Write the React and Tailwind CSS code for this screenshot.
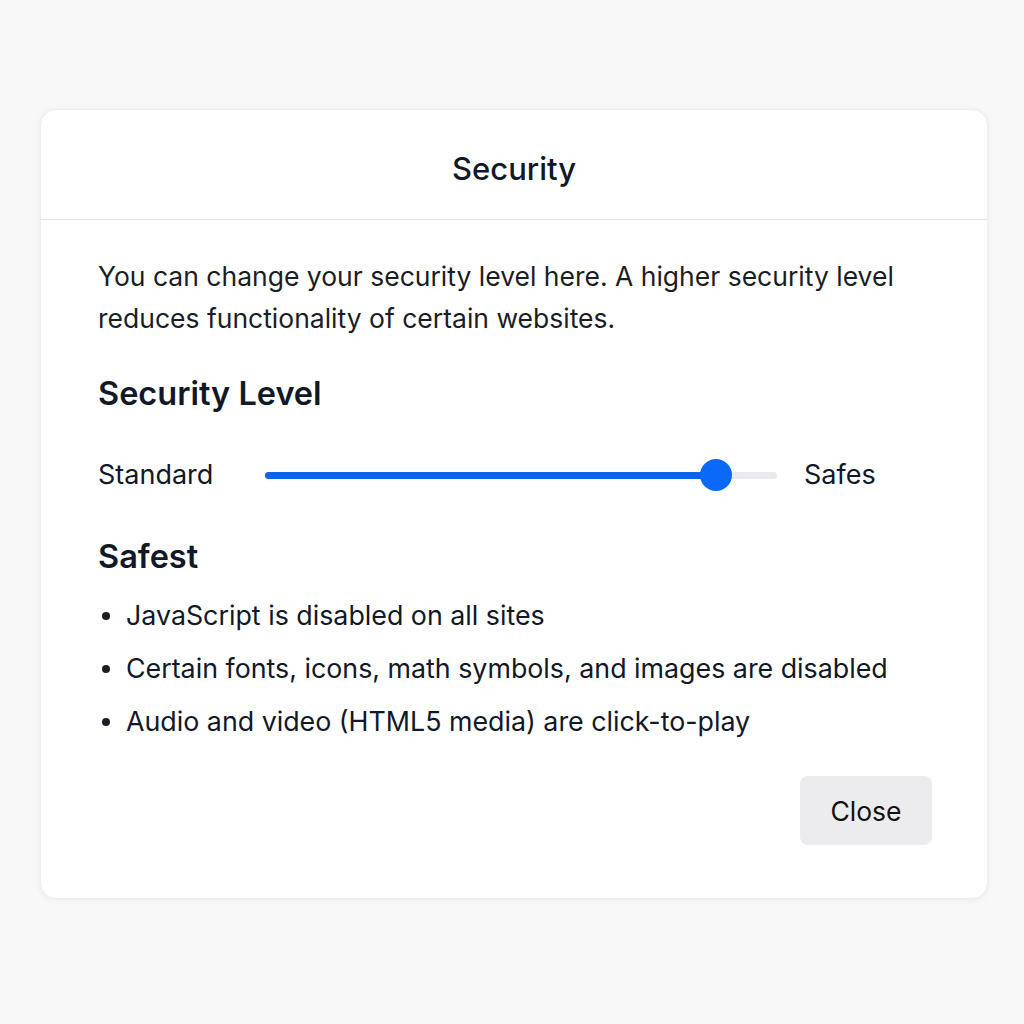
export default function App() {
  const font = { fontFamily: "Inter, 'Noto Sans', sans-serif" };
  return (
    <div className="w-[1024px] h-[1024px] bg-[#f8f8f8] pt-[109px] pl-[40px]" style={font}>
      <div className="w-[948px] h-[790px] bg-white rounded-[16px] shadow-[0_1px_6px_rgba(0,0,0,0.06)] border border-[#eeeeee] flex flex-col text-[#111827]">
        <div className="h-[110px] border-b border-[#e2e2e2] flex items-center justify-center">
          <h1 className="text-[31px] font-medium pt-[10px]">Security</h1>
        </div>
        <div className="pl-[57px] pr-[30px] pt-[35px]">
          <p className="text-[26.5px] leading-[42px] text-[#1a1d24]">
            You can change your security level here. A higher security level reduces functionality of certain websites.
          </p>
          <h2 className="mt-[37px] text-[32.5px] leading-[36px] font-semibold">Security Level</h2>
          <div className="mt-[47px] h-[32px] flex items-center">
            <span className="text-[27px] w-[167px]">Standard</span>
            <div className="relative w-[512px] h-[7px] rounded-full bg-[#e9eaee]">
              <div className="absolute left-0 top-0 h-[7px] w-[451px] rounded-full bg-[#0a62f2]"></div>
              <div className="absolute left-[435px] top-[-13px] w-[32px] h-[32px] rounded-full bg-[#0a6af7]"></div>
            </div>
            <span className="text-[27px] ml-[27px]">Safes</span>
          </div>
          <h2 className="mt-[48px] text-[32.5px] leading-[36px] font-semibold">Safest</h2>
          <ul className="mt-[14px] text-[26.8px]">
            {[
              "JavaScript is disabled on all sites",
              "Certain fonts, icons, math symbols, and images are disabled",
              "Audio and video (HTML5 media) are click-to-play",
            ].map((t) => (
              <li key={t} className="h-[53px] flex items-center">
                <span className="w-[8px] h-[8px] rounded-full bg-[#1a1d24] ml-[4px] mr-[16px]"></span>
                <span>{t}</span>
              </li>
            ))}
          </ul>
          <div className="flex justify-end mt-[28px] pr-[25px]">
            <button className="w-[132px] h-[69px] rounded-[8px] bg-[#ececee] text-[26.5px] text-[#111] pt-[3px]">Close</button>
          </div>
        </div>
      </div>
    </div>
  );
}
